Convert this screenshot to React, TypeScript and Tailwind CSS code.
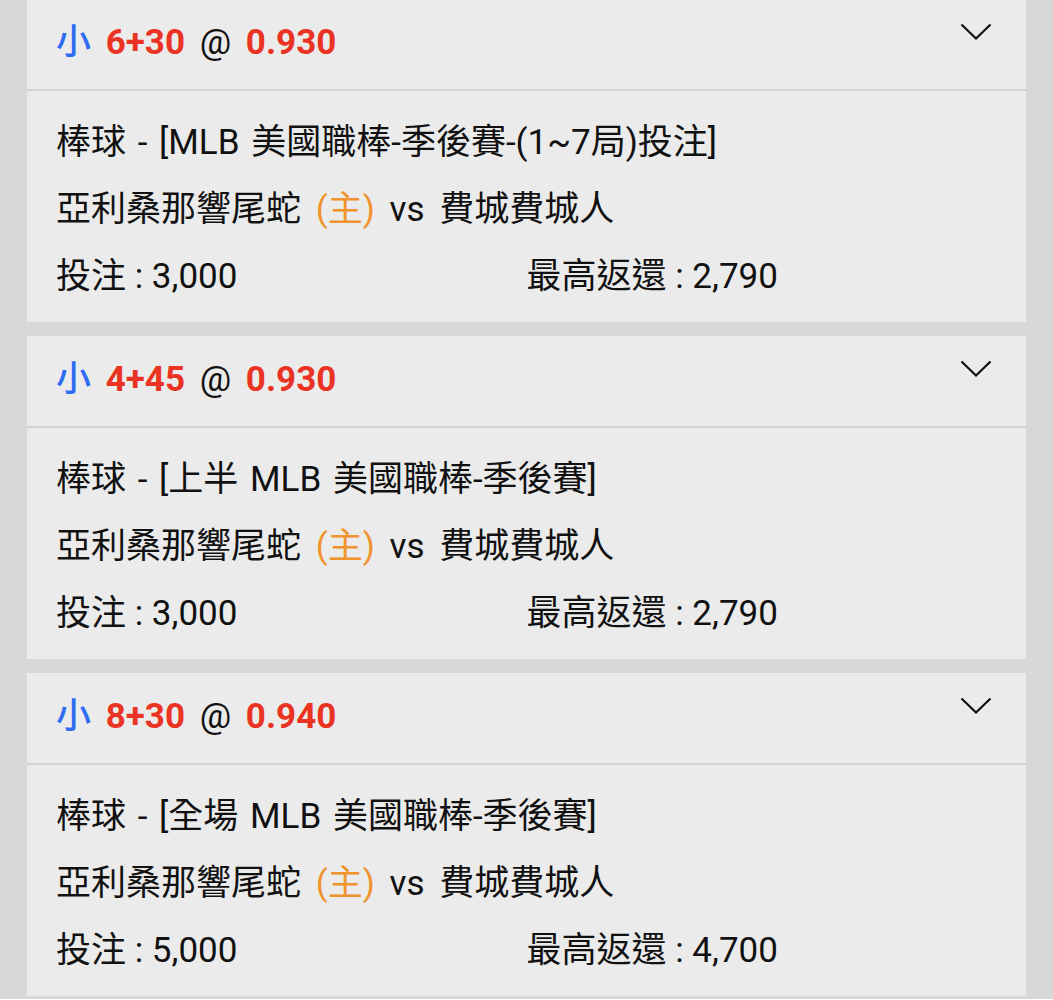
const FONT = 'font-[Roboto,"Noto_Sans_CJK_TC",sans-serif]'

interface Bet {
  line: string
  odds: string
  league: string
  stake: string
  payout: string
}

const bets: Bet[] = [
  { line: '6+30', odds: '0.930', league: '棒球 - [MLB 美國職棒-季後賽-(1~7局)投注]', stake: '3,000', payout: '2,790' },
  { line: '4+45', odds: '0.930', league: '棒球 - [上半 MLB 美國職棒-季後賽]', stake: '3,000', payout: '2,790' },
  { line: '8+30', odds: '0.940', league: '棒球 - [全場 MLB 美國職棒-季後賽]', stake: '5,000', payout: '4,700' },
]

function Chevron() {
  return (
    <svg width="32" height="18" viewBox="0 0 32 18" fill="none" className="mt-[24px] mr-[3px]">
      <path d="M1.5 1.5 L16 15.5 L30.5 1.5" stroke="#111" strokeWidth="2.2" />
    </svg>
  )
}

function BetCard({ bet }: { bet: Bet }) {
  return (
    <div className="bg-[#ebebeb] mx-[27px]">
      {/* header */}
      <div className="h-[92px] flex justify-between items-start pl-[29px] pr-[31px] border-b-2 border-[#d2d2d2]">
        <div className="mt-[22px] text-[35px] leading-[44px] text-[#111] [word-spacing:6px]">
          <span className="text-[#2d6cf3] font-medium">小</span>{' '}
          <span className="text-[#ea3323] font-bold">{bet.line}</span>{' '}
          <span>@</span>{' '}
          <span className="text-[#ea3323] font-bold">{bet.odds}</span>
        </div>
        <Chevron />
      </div>

      {/* body */}
      <div className="pt-[19px] pb-[11px] px-[29px] text-[35px] text-[#111]">
        <div className="h-[67px] flex items-center [word-spacing:3px]">{bet.league}</div>
        <div className="h-[67px] flex items-center whitespace-pre [word-spacing:6px]">
          <span>亞利桑那響尾蛇 </span>
          <span className="text-[#f0932e]">(主)</span>
          <span> vs 費城費城人</span>
        </div>
        <div className="h-[67px] grid grid-cols-2 items-center">
          <div>投注 : {bet.stake}</div>
          <div>最高返還 : {bet.payout}</div>
        </div>
      </div>
    </div>
  )
}

export default function App() {
  return (
    <div className={`${FONT} bg-[#d8d8d8] min-h-[1000px] -mt-px flex flex-col gap-[14px]`}>
      {bets.map((b, i) => (
        <BetCard key={i} bet={b} />
      ))}
    </div>
  )
}
